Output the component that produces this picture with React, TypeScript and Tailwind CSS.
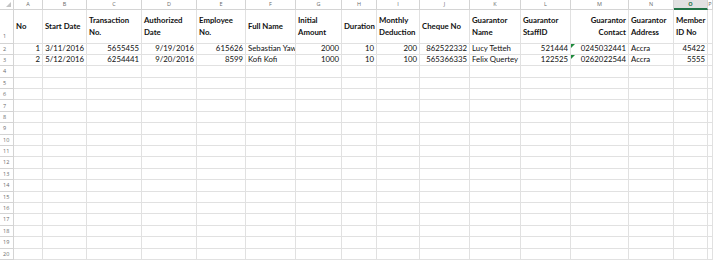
import React from "react";

const letters = ["A","B","C","D","E","F","G","H","I","J","K","L","M","N","O","P"];

const headers: string[][] = [
  ["No"],
  ["Start Date"],
  ["Transaction", "No."],
  ["Authorized", "Date"],
  ["Employee", "No."],
  ["Full Name"],
  ["Initial", "Amount"],
  ["Duration"],
  ["Monthly", "Deduction"],
  ["Cheque No"],
  ["Guarantor", "Name"],
  ["Guarantor", "StaffID"],
  ["Guarantor", "Contact"],
  ["Guarantor", "Address"],
  ["Member", "ID No"],
  [],
];

const rows: string[][] = [
  ["1","3/11/2016","5655455","9/19/2016","615626","Sebastian Yaw","2000","10","200","862522332","Lucy Tetteh","521444","0245032441","Accra","45422",""],
  ["2","5/12/2016","6254441","9/20/2016","8599","Kofi Kofi","1000","10","100","565366335","Felix Quertey","122525","0262022544","Accra","5555",""],
];

// true = right aligned
const rightAlign = [true,true,true,true,true,false,true,true,true,true,false,true,true,false,true,false];

function GreenMark() {
  return (
    <svg className="absolute left-0 top-0" width="4" height="4" viewBox="0 0 4 4">
      <polygon points="0,0 4,0 0,4" fill="#1e8a3c" />
    </svg>
  );
}

export default function App() {
  const font = { fontFamily: "Lato, 'Open Sans', sans-serif" };
  const hdrFont = { fontFamily: "'Open Sans', sans-serif" };
  return (
    <div className="w-[713px] h-[261px] overflow-hidden bg-white" style={font}>
      <div className="grid grid-cols-[14px_29px_44px_55px_55px_49px_50px_46px_35px_43px_50px_51px_50px_58px_45px_34px_1fr] grid-rows-[10px_33.5px_repeat(19,11.4px)] text-[7.8px] text-[#111]">
        {/* corner */}
        <div className="relative border-r border-b border-[#d4d4d4] bg-white">
          <svg className="absolute right-[2px] bottom-[2px]" width="5" height="5" viewBox="0 0 5 5">
            <polygon points="5,0 5,5 0,5" fill="#c4c4c4" />
          </svg>
        </div>
        {letters.map((l) =>
          l === "O" ? (
            <div key={l} className="flex items-center justify-center border-r border-b-2 border-r-[#d4d4d4] border-b-[#217346] bg-[#e1e1e1] text-[5.5px] font-bold text-[#217346]" style={hdrFont}>
              {l}
            </div>
          ) : (
            <div key={l} className="flex items-center justify-center border-r border-b border-[#d4d4d4] bg-white text-[5.5px] text-[#6a6a6a]" style={hdrFont}>
              {l}
            </div>
          )
        )}

        {/* row 1 */}
        <div className="flex items-end pb-[2px] pl-[3px] border-r border-b border-[#d4d4d4] text-[5.5px] text-[#6a6a6a]" style={hdrFont}>1</div>
        {headers.map((h, i) => (
          <div
            key={i}
            className={`flex flex-col justify-center pt-[1px] px-[2px] border-r border-b border-[#e1e1e1] font-bold leading-[11.4px] whitespace-nowrap overflow-hidden ${i === 12 ? "items-end" : "items-start"}`}
          >
            {h.map((line, j) => (
              <span key={j}>{line}</span>
            ))}
          </div>
        ))}

        {/* data rows */}
        {rows.map((r, ri) => (
          <React.Fragment key={ri}>
            <div className="flex items-center pl-[3px] border-r border-b border-[#d4d4d4] text-[5.5px] text-[#6a6a6a]" style={hdrFont}>{ri + 2}</div>
            {r.map((v, ci) => (
              <div
                key={ci}
                className={`relative flex items-center px-[2px] border-r border-b border-[#e1e1e1] whitespace-nowrap overflow-hidden ${rightAlign[ci] ? "justify-end" : "justify-start"}`}
              >
                {ci === 12 && <GreenMark />}
                {v}
              </div>
            ))}
          </React.Fragment>
        ))}

        {/* empty rows 4-20 */}
        {Array.from({ length: 17 }, (_, k) => k + 4).map((n) => (
          <React.Fragment key={n}>
            <div className="flex items-center pl-[3px] border-r border-b border-[#d4d4d4] text-[5.5px] text-[#6a6a6a]" style={hdrFont}>{n}</div>
            {letters.map((l) => (
              <div key={l} className="border-r border-b border-[#e1e1e1]" />
            ))}
          </React.Fragment>
        ))}
      </div>
    </div>
  );
}
